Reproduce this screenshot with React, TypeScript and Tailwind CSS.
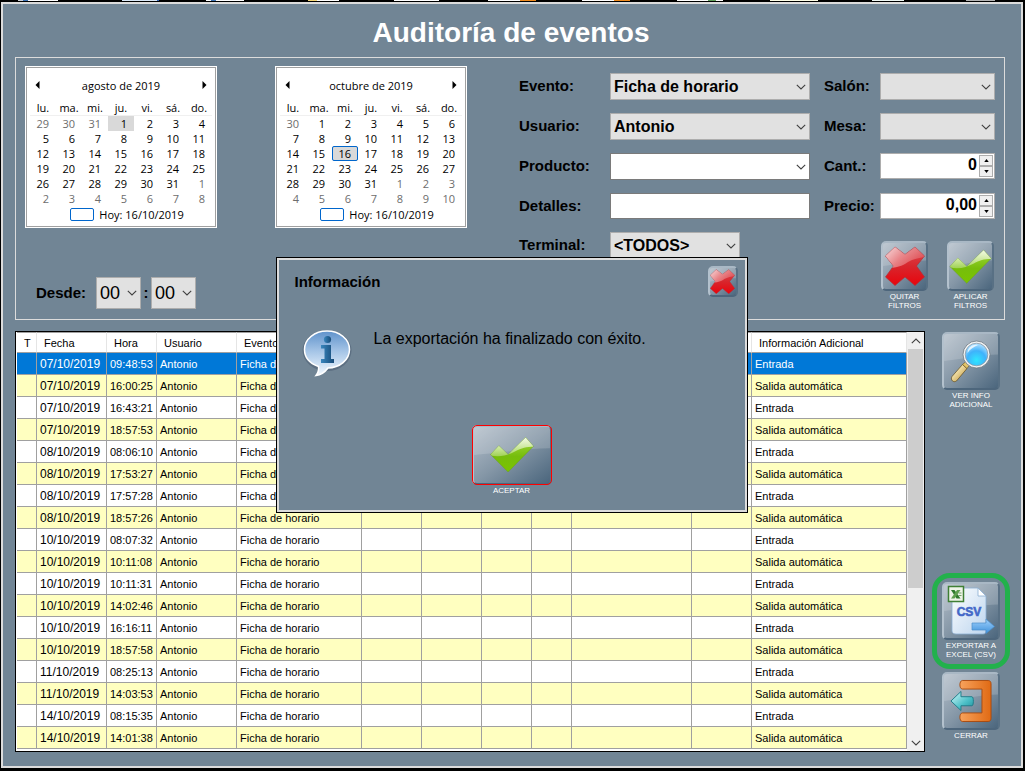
import { useId, useState } from 'react';
import type { ReactNode } from 'react';
import clsx from 'clsx';

const WEEKDAYS = ['lu.', 'ma.', 'mi.', 'ju.', 'vi.', 'sá.', 'do.'];

const EVENTS = [
  ['07/10/2019', '09:48:53', 'Entrada'],
  ['07/10/2019', '16:00:25', 'Salida automática'],
  ['07/10/2019', '16:43:21', 'Entrada'],
  ['07/10/2019', '18:57:53', 'Salida automática'],
  ['08/10/2019', '08:06:10', 'Entrada'],
  ['08/10/2019', '17:53:27', 'Salida automática'],
  ['08/10/2019', '17:57:28', 'Entrada'],
  ['08/10/2019', '18:57:26', 'Salida automática'],
  ['10/10/2019', '08:07:32', 'Entrada'],
  ['10/10/2019', '10:11:08', 'Salida automática'],
  ['10/10/2019', '10:11:31', 'Entrada'],
  ['10/10/2019', '14:02:46', 'Salida automática'],
  ['10/10/2019', '16:16:11', 'Entrada'],
  ['10/10/2019', '18:57:58', 'Salida automática'],
  ['11/10/2019', '08:25:13', 'Entrada'],
  ['11/10/2019', '14:03:53', 'Salida automática'],
  ['14/10/2019', '08:15:35', 'Entrada'],
  ['14/10/2019', '14:01:38', 'Salida automática'],
];

const COLUMNS = [
  { title: 'T', width: 20 },
  { title: 'Fecha', width: 70 },
  { title: 'Hora', width: 50 },
  { title: 'Usuario', width: 80 },
  { title: 'Evento', width: 125 },
  { title: '', width: 60 },
  { title: '', width: 60 },
  { title: '', width: 50 },
  { title: '', width: 40 },
  { title: '', width: 120 },
  { title: '', width: 60 },
  { title: 'Información Adicional', width: 155 },
];

// windows that peek out above the frame: [gap before, width, class]
const PEEKS: [number, number, string][] = [
  [17, 5, 'bg-gray-300'],
  [0, 5, 'bg-[#3a6fb0]'],
  [0, 30, 'bg-white'],
  [64, 35, 'bg-[#dbe9f7]'],
  [0, 2, 'bg-[#2f5fb0]'],
  [47, 5, 'bg-white'],
  [0, 5, 'bg-[#3a6fb0]'],
  [0, 28, 'bg-white'],
  [64, 9, 'bg-[#f5d878]'],
  [0, 22, 'bg-white'],
  [55, 45, 'bg-white'],
  [49, 32, 'bg-white'],
  [0, 16, 'bg-[#ef8a1d]'],
  [46, 32, 'bg-white'],
  [0, 16, 'bg-[#ef8a1d]'],
  [47, 31, 'bg-white'],
  [0, 8, 'bg-[#5f9e58]'],
  [0, 7, 'bg-white'],
  [47, 48, 'bg-[#fdfde6]'],
  [54, 32, 'bg-[#eef7f3]'],
  [62, 29, 'bg-[#b5b5b5]'],
];

const Chevron = ({ className }: { className?: string }) => (
  <svg
    viewBox="0 0 10 6"
    className={clsx('pointer-events-none h-[6px] w-[10px]', className)}
    fill="none"
    stroke="#404040"
    strokeWidth="1.1"
  >
    <path d="M0.8 0.8 5 5 9.2 0.8" />
  </svg>
);

const CROSS = 'M10 1 20 8.5 30 1 39.5 10 31.5 20 39.5 31 30 39.500 20 31 10 39.500 0.5 31 8.5 20 0.5 10Z';

const CrossIcon = ({ className }: { className?: string }) => {
  const id = useId();
  return (
    <svg viewBox="0 0 40 40" className={className}>
      <defs>
        <linearGradient id={`${id}r`} x1="0" y1="0" x2="0" y2="1">
          <stop offset="0" stopColor="#dc4a50" />
          <stop offset="0.5" stopColor="#d8262d" />
          <stop offset="1" stopColor="#e8040c" />
        </linearGradient>
        <linearGradient id={`${id}g`} x1="0" y1="0" x2="1" y2="0.4">
          <stop offset="0" stopColor="#fff" stopOpacity="0.8" />
          <stop offset="0.5" stopColor="#fff" stopOpacity="0.4" />
          <stop offset="1" stopColor="#fff" stopOpacity="0.15" />
        </linearGradient>
        <clipPath id={`${id}c`}>
          <path d={CROSS} />
        </clipPath>
      </defs>
      <path
        d={CROSS}
        fill={`url(#${id}r)`}
        stroke="#b03038"
        strokeWidth="0.7"
        strokeLinejoin="round"
      />
      <path
        d="M0 0H40V11C34 12 28 13 23 16C17 20 12 22 0 22Z"
        fill={`url(#${id}g)`}
        clipPath={`url(#${id}c)`}
      />
    </svg>
  );
};

const CHECK = 'M9.5 10 19 19 37 1.5 45 10.5 19 37 1 19Z';

const CheckIcon = ({ className }: { className?: string }) => {
  const id = useId();
  return (
    <svg viewBox="0 0 46 38" className={className}>
      <defs>
        <linearGradient id={`${id}l`} x1="0" y1="0" x2="0" y2="1">
          <stop offset="0" stopColor="#a4d93c" />
          <stop offset="0.55" stopColor="#76bd0c" />
          <stop offset="1" stopColor="#7ac400" />
        </linearGradient>
        <linearGradient id={`${id}g`} x1="0" y1="0" x2="0" y2="1">
          <stop offset="0" stopColor="#fff" stopOpacity="0.9" />
          <stop offset="1" stopColor="#fff" stopOpacity="0.3" />
        </linearGradient>
        <clipPath id={`${id}c`}>
          <path d={CHECK} />
        </clipPath>
      </defs>
      <path
        d={CHECK}
        fill={`url(#${id}l)`}
        stroke="#699f1e"
        strokeWidth="0.5"
        strokeLinejoin="round"
      />
      <path
        d="M0 0H46V11C38 11 33 12 26 16C18 20 12 22 0 20Z"
        fill={`url(#${id}g)`}
        clipPath={`url(#${id}c)`}
      />
    </svg>
  );
};

const MagnifierIcon = ({ className }: { className?: string }) => (
  <svg viewBox="0 0 42 44" className={className}>
    <defs>
      <radialGradient id="lens" cx="0.5" cy="0.75" r="0.75">
        <stop offset="0" stopColor="#2fe6ff" />
        <stop offset="0.55" stopColor="#3fb2fb" />
        <stop offset="1" stopColor="#b9e3ff" />
      </radialGradient>
      <linearGradient id="handle" x1="0" y1="0" x2="1" y2="1">
        <stop offset="0.2" stopColor="#fff6c8" />
        <stop offset="1" stopColor="#b8892a" />
      </linearGradient>
    </defs>
    <path
      d="M12.5 25.5 17 29.5 6.5 42C3.5 44 0 41 2 37.5Z"
      fill="url(#handle)"
      stroke="#5e4a1c"
      strokeWidth="0.7"
    />
    <path d="M16 22.5 19.5 26 17 29.5 12.5 25.5Z" fill="#e2c468" stroke="#6b5423" strokeWidth="0.6" />
    <circle cx="26.5" cy="15.5" r="13.5" fill="#f4f4f4" stroke="#6d7780" strokeWidth="0.8" />
    <circle cx="26.5" cy="15.5" r="11.3" fill="url(#lens)" stroke="#8b98a4" strokeWidth="0.8" />
    <path d="M17.5 14C17.500 8 23 5 28 6C24 8 20 10 17.500 14Z" fill="#fff" opacity="0.75" />
  </svg>
);

const CsvIcon = ({ className }: { className?: string }) => (
  <svg viewBox="0 0 48 52" className={className}>
    <defs>
      <linearGradient id="sheet" x1="0" y1="0" x2="1" y2="1">
        <stop offset="0" stopColor="#fdfeff" />
        <stop offset="1" stopColor="#bcd5ee" />
      </linearGradient>
      <linearGradient id="go" x1="0" y1="0" x2="0" y2="1">
        <stop offset="0" stopColor="#9fd0fb" />
        <stop offset="1" stopColor="#3f92dc" />
      </linearGradient>
    </defs>
    <path d="M7 3H31L39 11V46C39 48 38 49 36 49H9C7 49 5 48 5 46V5Z" fill="url(#sheet)" stroke="#8badd0" strokeWidth="0.8" />
    <path d="M31 3V11H39Z" fill="#fff" stroke="#8badd0" strokeWidth="0.8" />
    <rect x="1.5" y="1.5" width="15" height="15" fill="#eef4e8" stroke="#3f7f35" strokeWidth="1.5" />
    <path d="M4 5H7.5L13.5 13.500H9.500Z" fill="#2f7a2c" />
    <path d="M10 5H13.500L7.500 13.500H4Z" fill="#5ea04e" />
    <path d="M11.500 8H14.500M11.500 10.500H14.500" stroke="#3f7f35" strokeWidth="0.7" />
    <text
      x="22"
      y="31"
      textAnchor="middle"
      fontFamily="'Liberation Sans', Arial, sans-serif"
      fontWeight="700"
      fontSize="12"
      fill="#4368c8"
      stroke="#4368c8"
      strokeWidth="0.6"
    >
      CSV
    </text>
    <path d="M25 38H39V34L47.500 41.500 39 48.500V45H25Z" fill="url(#go)" stroke="#4c8cc9" strokeWidth="0.7" />
  </svg>
);

const ExitIcon = ({ className }: { className?: string }) => (
  <svg viewBox="0 0 44 46" className={className}>
    <defs>
      <linearGradient id="door" x1="0" y1="0" x2="1" y2="0">
        <stop offset="0" stopColor="#f7a25c" />
        <stop offset="1" stopColor="#e06a14" />
      </linearGradient>
      <linearGradient id="back" x1="0" y1="0" x2="1" y2="1">
        <stop offset="0" stopColor="#d8fbfb" />
        <stop offset="0.6" stopColor="#4dc0c8" />
        <stop offset="1" stopColor="#1f8f9a" />
      </linearGradient>
    </defs>
    <path
      d="M13 1.500H40C42 1.500 43 3 43 5V41C43 43 42 44.500 40 44.500H13C9.500 44.500 9.500 35.500 13 35.500H33.500V10.500H13C9.500 10.500 9.500 1.500 13 1.500Z"
      fill="url(#door)"
      stroke="#a84a10"
      strokeWidth="1"
    />
    <path
      d="M1 23 11.500 13V18.500H23C25 18.500 25 28 23 28H11.500V33Z"
      fill="url(#back)"
      stroke="#1f7b88"
      strokeWidth="1"
      strokeLinejoin="round"
    />
  </svg>
);

const InfoIcon = ({ className }: { className?: string }) => (
  <svg viewBox="0 0 52 52" className={className}>
    <defs>
      <linearGradient id="bubble" x1="0" y1="0" x2="0" y2="1">
        <stop offset="0" stopColor="#5f92cb" />
        <stop offset="0.45" stopColor="#a4c4e6" />
        <stop offset="1" stopColor="#f4faff" />
      </linearGradient>
      <linearGradient id="letter" x1="0" y1="0" x2="1" y2="0">
        <stop offset="0" stopColor="#3a86bd" />
        <stop offset="1" stopColor="#164a78" />
      </linearGradient>
    </defs>
    <ellipse cx="26" cy="23.5" rx="24.5" ry="20.5" fill="#42556a" opacity="0.45" />
    <path
      d="M26 4C38.500 4 48.500 12 48.500 22.500C48.500 33 38.500 41 27 41C24 45 20 48 15 48.500C17 46 18 43 17.500 39.500C9 36.500 3.500 30.500 3.500 22.500C3.500 12 13.500 4 26 4Z"
      fill="url(#bubble)"
      stroke="#fff"
      strokeWidth="1.5"
    />
    <circle cx="26.5" cy="12.5" r="3.6" fill="url(#letter)" />
    <path d="M20 18H30V32H33V36H20V32H23.500V21.500H20Z" fill="url(#letter)" />
  </svg>
);

interface GlossyButtonProps {
  label: string;
  lines?: string[];
  face: string;
  onClick?: () => void;
  children: ReactNode;
}

const GlossyButton = ({ label, lines = [], face, onClick, children }: GlossyButtonProps) => (
  <button
    type="button"
    aria-label={label}
    onClick={onClick}
    className="flex flex-col items-center text-[8px] leading-[9px] text-white"
  >
    <span
      className={clsx(
        'relative flex items-center justify-center overflow-hidden rounded-[5px] border-2 border-t-[#a9b8c5] border-r-[#587084] border-b-[#4d667c] border-l-[#b3c1cd] bg-linear-to-br from-[#b4bfca] via-[#8496a6] to-[#4b667d]',
        face
      )}
    >
      <svg
        viewBox="0 0 100 100"
        preserveAspectRatio="none"
        className="absolute inset-0 h-full w-full"
      >
        <path d="M0 0H100V38C70 38 40 46 0 50Z" fill="#fff" opacity="0.16" />
      </svg>
      <span className="relative">{children}</span>
    </span>
    {lines.length > 0 && (
      <span className="flex flex-col pt-px">
        {lines.map((line) => (
          <span key={line} className="whitespace-nowrap">
            {line}
          </span>
        ))}
      </span>
    )}
  </button>
);

interface CalendarProps {
  title: string;
  lead: number[];
  days: number;
  selected: number;
  today?: boolean;
}

const Calendar = ({ title, lead, days, selected, today }: CalendarProps) => {
  const cells = [
    ...lead.map((day) => ({ day, out: true })),
    ...Array.from({ length: days }, (_, i) => ({ day: i + 1, out: false })),
  ];
  const tail = 42 - cells.length;
  for (let i = 1; i <= tail; i++) {
    cells.push({ day: i, out: true });
  }
  const weeks = Array.from({ length: 6 }, (_, i) => cells.slice(i * 7, i * 7 + 7));

  return (
    <div className="w-[192px] border border-white bg-white font-['Open_Sans',sans-serif] text-[11px] leading-[15px] text-black">
      <div className="border border-[#a0a0a0] px-[3px] pb-[4px]">
        <div className="flex h-[32px] items-center justify-between px-[5px] pt-[2px]">
          <button type="button" aria-label="Mes anterior">
            <svg viewBox="0 0 4 8" className="h-[8px] w-[5px]">
              <path d="M4 0V8L0 4Z" />
            </svg>
          </button>
          <span>{title}</span>
          <button type="button" aria-label="Mes siguiente">
            <svg viewBox="0 0 4 8" className="h-[8px] w-[5px]">
              <path d="M0 0V8L4 4Z" />
            </svg>
          </button>
        </div>
        <table className="w-full table-fixed border-separate border-spacing-0">
          <thead>
            <tr>
              {WEEKDAYS.map((name) => (
                <th key={name} className="h-[16px] border-b border-[#f0f0f0] p-0 font-normal">
                  {name}
                </th>
              ))}
            </tr>
          </thead>
          <tbody>
            {weeks.map((week, row) => (
              <tr key={row}>
                {week.map(({ day, out }) => {
                  const active = !out && day === selected;
                  return (
                    <td
                      key={day}
                      className={clsx(
                        'h-[15px] p-0 text-right',
                        out && 'text-[#6d6d6d]',
                        active && 'bg-[#d9d9d9]',
                        active && today && 'rounded-[2px] outline outline-offset-[-1px] outline-[#0066cc]'
                      )}
                    >
                      <span className="block pr-[7px]">{day}</span>
                    </td>
                  );
                })}
              </tr>
            ))}
          </tbody>
        </table>
        <div className="flex items-center justify-center gap-[5px] pt-px pl-[12px]">
          <span className="h-[13px] w-[24px] rounded-[2px] border border-[#0066cc]" />
          Hoy: 16/10/2019
        </div>
      </div>
    </div>
  );
};

interface SelectProps {
  id: string;
  value?: string;
  className?: string;
  text?: string;
  label?: string;
  editable?: boolean;
}

const Select = ({ id, value = '', className, text = 'text-base font-bold', label, editable }: SelectProps) => (
  <div className={clsx('relative', className)}>
    <select
      id={id}
      aria-label={label}
      defaultValue={value}
      className={clsx(
        'h-full w-full appearance-none border pl-[3px] text-black',
        editable ? 'border-[#7a7a7a] bg-white' : 'border-[#adadad] bg-[#e1e1e1]',
        text
      )}
    >
      <option>{value}</option>
    </select>
    <Chevron className="absolute top-1/2 right-[4px] -translate-y-1/2" />
  </div>
);

const Spinner = ({ id, value }: { id: string; value: string }) => (
  <div className="flex h-[26px] self-start border border-[#adadad] bg-white p-px">
    <input
      id={id}
      defaultValue={value}
      className="min-w-0 flex-1 pr-[2px] pb-[3px] text-right text-base font-bold text-black"
    />
    <div className="flex w-[14px] flex-col">
      {['M0 4 3 0 6 4Z', 'M0 0 3 4 6 0Z'].map((d, i) => (
        <button
          key={d}
          type="button"
          aria-label={i === 0 ? 'Más' : 'Menos'}
          className="flex flex-1 items-center justify-center border border-[#adadad] bg-[#f0f0f0]"
        >
          <svg viewBox="0 0 6 4" className="h-[3px] w-[5px]">
            <path d={d} />
          </svg>
        </button>
      ))}
    </div>
  </div>
);

const Filters = () => (
  <div className="grid flex-1 grid-cols-[92px_1fr_70px_115px] content-start items-center gap-y-[13px] pt-[7px] text-[15px] font-bold">
    <label htmlFor="evento" className="pl-px">Evento:</label>
    <Select id="evento" value="Ficha de horario" className="h-[27px]" />
    <label htmlFor="salon" className="pl-[14px]">Salón:</label>
    <Select id="salon" className="h-[27px]" />

    <label htmlFor="usuario" className="pl-px">Usuario:</label>
    <Select id="usuario" value="Antonio" className="h-[27px]" />
    <label htmlFor="mesa" className="pl-[14px]">Mesa:</label>
    <Select id="mesa" className="h-[27px]" />

    <label htmlFor="producto" className="pl-px">Producto:</label>
    <Select id="producto" className="h-[27px]" editable />
    <label htmlFor="cant" className="pl-[14px]">Cant.:</label>
    <Spinner id="cant" value="0" />

    <label htmlFor="detalles" className="pl-px">Detalles:</label>
    <input id="detalles" className="h-[26px] w-full border border-[#7a7a7a] bg-white px-[3px]" />
    <label htmlFor="precio" className="pl-[14px]">Precio:</label>
    <Spinner id="precio" value="0,00" />

    <label htmlFor="terminal" className="self-start pt-[2px] pl-px">Terminal:</label>
    <Select id="terminal" value="<TODOS>" className="h-[27px] w-[130px] self-start" />
    <div className="col-span-2 flex justify-end gap-[19px] pt-[9px] pr-px font-normal">
      <GlossyButton label="Quitar filtros" lines={['QUITAR', 'FILTROS']} face="h-[50px] w-[47px]">
        <CrossIcon className="h-[40px] w-[40px]" />
      </GlossyButton>
      <GlossyButton label="Aplicar filtros" lines={['APLICAR', 'FILTROS']} face="h-[50px] w-[47px]">
        <CheckIcon className="h-[37px] w-[43px]" />
      </GlossyButton>
    </div>
  </div>
);

const EventsTable = () => (
  <div className="flex min-w-0 flex-1 overflow-hidden border border-black bg-white pl-px">
    <div className="min-w-0 flex-1 overflow-hidden">
      <table className="w-full table-fixed border-separate border-spacing-0 text-left text-[11px] text-black">
        <colgroup>
          {COLUMNS.map(({ width }, i) => (
            <col key={i} style={{ width }} />
          ))}
        </colgroup>
        <thead>
          <tr>
            {COLUMNS.map(({ title }, i) => (
              <th
                key={i}
                className="h-[21px] border-t border-r border-b border-t-[#a0a0a0] border-r-[#e5e5e5] border-b-[#a0a0a0] p-0 pt-px pl-[7px] font-normal whitespace-nowrap"
              >
                {title}
              </th>
            ))}
          </tr>
        </thead>
        <tbody>
          {EVENTS.map(([date, time, info], row) => (
            <tr
              key={row}
              className={clsx(
                row === 0 && 'bg-[#0078d7] text-white',
                row > 0 && row % 2 === 1 && 'bg-[#ffffc0]'
              )}
            >
              {['', date, time, 'Antonio', 'Ficha de horario', '', '', '', '', '', '', info].map(
                (text, col) => (
                  <td
                    key={col}
                    className={clsx(
                      'h-[22px] border-r border-b border-[#a0a0a0] p-0 pt-px pl-[3px] whitespace-nowrap',
                      col === 1 && 'text-[12px]'
                    )}
                  >
                    {text}
                  </td>
                )
              )}
            </tr>
          ))}
        </tbody>
      </table>
    </div>
    <div className="flex w-[17px] flex-col items-center bg-[#f0f0f0]">
      <button type="button" aria-label="Subir" className="flex h-[17px] items-center">
        <Chevron className="rotate-180" />
      </button>
      <div className="h-[239px] w-[15px] bg-[#cdcdcd]" />
      <button type="button" aria-label="Bajar" className="mt-auto flex h-[17px] items-center">
        <Chevron />
      </button>
    </div>
  </div>
);

const InfoDialog = ({ onClose }: { onClose: () => void }) => (
  <div className="absolute inset-0 grid place-items-center pr-[2px] pb-[2px]">
    <div
      role="dialog"
      aria-label="Información"
      className="w-[472px] border border-black"
    >
      <div className="flex min-h-[254px] flex-col border-2 border-[#dcdcdc] bg-[#718595] pr-[7px] pb-[15px] pl-[16px]">
        <div className="flex items-start justify-between pt-[6px]">
          <h2 className="pt-[5px] text-[15px] font-bold">Información</h2>
          <GlossyButton label="Cerrar aviso" face="h-[31px] w-[30px]" onClick={onClose}>
            <CrossIcon className="h-[25px] w-[25px]" />
          </GlossyButton>
        </div>
        <div className="flex gap-[21px] pt-[30px] pl-[6px]">
          <InfoIcon className="h-[52px] w-[52px]" />
          <p className="text-base">La exportación ha finalizado con éxito.</p>
        </div>
        <div className="mt-auto flex justify-center pr-[9px]">
          <GlossyButton
            label="Aceptar"
            lines={['ACEPTAR']}
            face="h-[60px] w-[80px] outline outline-offset-[-1px] outline-[#ff0000]"
            onClick={onClose}
          >
            <CheckIcon className="h-[37px] w-[46px]" />
          </GlossyButton>
        </div>
      </div>
    </div>
  </div>
);

export default function App() {
  const [showInfo, setShowInfo] = useState(true);

  return (
    <div className="relative flex h-screen min-w-[1025px] flex-col bg-black pr-[2px] pb-[3px] pl-px font-['Liberation_Sans',Arial,sans-serif] text-black">
      <div className="flex h-[2px] items-start overflow-hidden">
        {PEEKS.map(([gap, width, color], i) => (
          <span key={i} className={clsx('h-px', color)} style={{ marginLeft: gap, width }} />
        ))}
      </div>

      <main className="flex min-h-0 flex-1 flex-col border-2 border-[#dcdcdc] bg-[#718595] pb-[14px] pl-[12px]">
        <h1 className="flex h-[53px] items-center justify-center pt-[4px] pr-[14px] text-[28px] font-bold text-white">
          Auditoría de eventos
        </h1>

        <section className="mr-[16px] flex min-h-[263px] gap-[51px] border border-[#dcdcdc] py-[8px] pr-[9px] pl-[9px]">
          <div className="flex flex-col">
            <div className="flex gap-[58px]">
              <Calendar title="agosto de 2019" lead={[29, 30, 31]} days={31} selected={1} />
              <Calendar title="octubre de 2019" lead={[30]} days={31} selected={16} today />
            </div>
            <div className="mt-auto flex items-center pb-[2px] pl-[11px]">
              <label htmlFor="hora" className="w-[60px] text-[15px] font-bold">
                Desde:
              </label>
              <Select id="hora" value="00" className="h-[32px] w-[45px]" text="text-lg" />
              <span className="w-[10px] text-center text-[15px] font-bold">:</span>
              <Select id="minuto" label="Minuto" value="00" className="h-[32px] w-[45px]" text="text-lg" />
            </div>
          </div>
          <Filters />
        </section>

        <div className="mt-[11px] flex min-h-0 flex-1">
          <EventsTable />
          <nav className="mr-[11px] ml-[7px] flex w-[78px] flex-col items-center pt-px pb-[12px]">
            <GlossyButton label="Ver info adicional" lines={['VER INFO', 'ADICIONAL']} face="h-[58px] w-[58px]">
              <MagnifierIcon className="h-[44px] w-[42px]" />
            </GlossyButton>
            <div className="mt-auto mb-[3px] flex w-full justify-center rounded-[18px] border-[5px] border-[#22b14c] pt-[4px] pb-[5px]">
              <GlossyButton label="Exportar a Excel (CSV)" lines={['EXPORTAR A', 'EXCEL (CSV)']} face="h-[58px] w-[58px]">
                <CsvIcon className="h-[52px] w-[48px]" />
              </GlossyButton>
            </div>
            <GlossyButton label="Cerrar" lines={['CERRAR']} face="h-[58px] w-[58px]">
              <ExitIcon className="h-[44px] w-[42px]" />
            </GlossyButton>
          </nav>
        </div>
      </main>

      {showInfo && <InfoDialog onClose={() => setShowInfo(false)} />}
    </div>
  );
}
